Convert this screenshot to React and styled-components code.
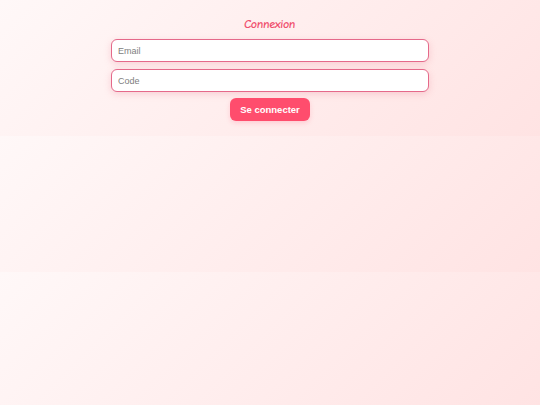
import React from "react";
import styled, { createGlobalStyle } from "styled-components";

const GlobalStyle = createGlobalStyle`
	html {
		background: linear-gradient(135deg, #fff8f8 0%, #ffe3e3 100%);
	}
	body {
		margin: 0;
		font-family: "Liberation Sans", Arial, sans-serif;
	}
`

const Page = styled.div`
	display: flex;
	flex-direction: column;
	align-items: center;
	padding: 17px 0 15px;
`

const Title = styled.h2`
	margin: 0 0 7px;
	font-family: "Comic Sans MS", "Comic Neue", cursive;
	font-size: 12px;
	font-weight: bold;
	letter-spacing: -0.3px;
	line-height: 15px;
	color: #f0506e;
	transform: skewX(-6deg);
`

const Form = styled.form`
	width: 318px;
	display: flex;
	flex-direction: column;
	align-items: center;
	gap: 7px;
`

const Input = styled.input`
	box-sizing: border-box;
	width: 100%;
	height: 23px;
	padding: 0 6px;
	border: 1.5px solid #e5698a;
	border-radius: 6px;
	background: #ffffff;
	box-shadow: 0 2px 7px rgba(230, 120, 140, 0.28);
	font-family: "Liberation Sans", Arial, sans-serif;
	font-size: 9px;
	color: #333;
	outline: none;

	&::placeholder {
		color: #808080;
	}
`

const Button = styled.button`
	margin-top: -1px;
	width: 80px;
	height: 23px;
	border: none;
	border-radius: 6px;
	background: #ff4d6d;
	color: #ffffff;
	font-family: "Liberation Sans", Arial, sans-serif;
	font-size: 9.5px;
	font-weight: bold;
	box-shadow: 0 2px 5px rgba(255, 77, 109, 0.2);
	cursor: pointer;
`

export default function App() {
	return <Page>
		<GlobalStyle />
		<Title>Connexion</Title>
		<Form onSubmit={e => e.preventDefault()}>
			<Input type="email" placeholder="Email" />
			<Input type="text" placeholder="Code" />
			<Button type="submit">Se connecter</Button>
		</Form>
	</Page>
}
